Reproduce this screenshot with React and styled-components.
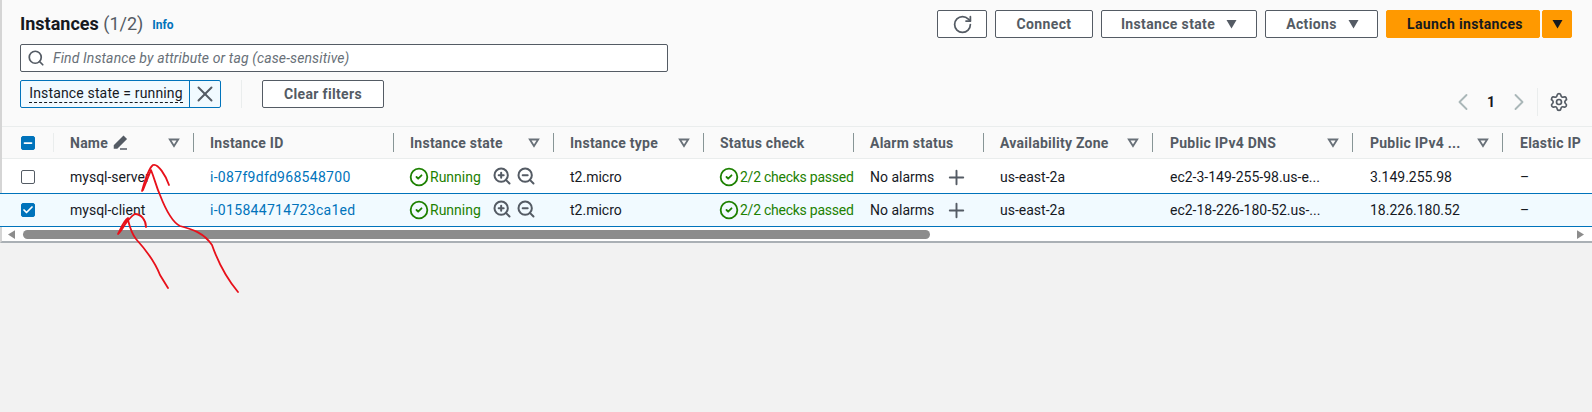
import React from 'react';
import styled, { createGlobalStyle } from 'styled-components';
import { Search, RotateCw, X, ChevronLeft, ChevronRight, Settings, ZoomIn, ZoomOut, CircleCheck, Plus, Check, Minus } from 'lucide-react';

const Global = createGlobalStyle`
  html, body { margin: 0; padding: 0; height: 412px; overflow: hidden; background: #f2f2f2; }
  body { font-family: Roboto, "Liberation Sans", sans-serif; font-size: 14px; color: #16191f; }
`;

const Page = styled.div`
  position: relative;
  width: 1592px;
  height: 412px;
  background: #f2f2f2;
`;

const Panel = styled.section`
  background: #fff;
  border-left: 2px solid #d5d5d5;
  border-bottom: 2px solid #aab0b5;
  height: 243px;
  box-sizing: border-box;
  display: flex;
  flex-direction: column;
`;

const Toolbar = styled.header`
  background: #fafafa;
  height: 127px;
  box-sizing: border-box;
  padding: 10px 20px 0 18px;
  display: grid;
  grid-template-columns: 1fr auto;
  border-bottom: 1px solid #eaeded;
`;

const LeftTools = styled.div`
  display: flex;
  flex-direction: column;
`;

const TitleRow = styled.div`
  height: 27px;
  display: flex;
  align-items: center;
  gap: 9px;
`;

const Title = styled.h1`
  margin: 0;
  font-size: 18px;
  font-weight: 700;
  color: #16191f;
`;

const Count = styled.span`
  font-weight: 400;
  color: #545b64;
`;

const Info = styled.a`
  font-size: 12px;
  font-weight: 700;
  color: #0073bb;
  margin-top: 2px;
`;

const SearchBox = styled.div`
  margin-top: 7px;
  width: 648px;
  height: 28px;
  box-sizing: border-box;
  background: #fff;
  border: 1px solid #545b64;
  border-radius: 2px;
  display: flex;
  align-items: center;
  gap: 8px;
  padding-left: 6px;
  font-style: italic;
  font-size: 14px;
  letter-spacing: 0.12px;
  color: #687078;
`;

const FilterRow = styled.div`
  margin-top: 8px;
  display: flex;
  align-items: center;
  height: 28px;
`;

const Token = styled.div`
  width: 201px;
  height: 28px;
  box-sizing: border-box;
  border: 1px solid #0073bb;
  border-radius: 2px;
  background: #f1faff;
  display: flex;
`;

const TokenLabel = styled.span`
  flex: 1;
  display: flex;
  align-items: center;
  justify-content: center;
  padding-left: 2px;
  border-right: 1px solid #0073bb;
`;

const TokenText = styled.span`
  border-bottom: 1px dashed #16191f;
  line-height: 17px;
  font-size: 14px;
  letter-spacing: 0.15px;
`;

const TokenClose = styled.span`
  width: 30px;
  display: flex;
  align-items: center;
  justify-content: center;
  color: #545b64;
`;

const Divider = styled.span`
  width: 1px;
  height: 28px;
  background: #eaeded;
  margin: 0 20px;
`;

const Button = styled.button`
  font-family: inherit;
  width: ${(p) => p.$w}px;
  height: 28px;
  box-sizing: border-box;
  background: #fff;
  border: 1px solid #545b64;
  border-radius: 2px;
  color: #545b64;
  font-size: 14px;
  font-weight: 700;
  letter-spacing: 0.35px;
  padding: 0 0 0 ${(p) => p.$pl || 0}px;
  display: flex;
  align-items: center;
  justify-content: center;
  gap: 11px;
`;

const Primary = styled(Button)`
  background: #ff9900;
  border: 1px solid #ff9900;
  color: #16191f;
`;

const Caret = styled.svg`
  width: 11px;
  height: 10px;
  fill: currentColor;
  flex: none;
`;

const RightTools = styled.div`
  display: flex;
  flex-direction: column;
  align-items: flex-end;
`;

const Actions = styled.div`
  display: flex;
  gap: 8px;
`;

const SplitGroup = styled.div`
  display: flex;
  gap: 2px;
`;

const Pager = styled.div`
  margin-top: 50px;
  display: flex;
  align-items: center;
  color: #aab7b8;
  height: 28px;
`;

const PageNumber = styled.span`
  font-weight: 700;
  color: #16191f;
  margin: 0 10px;
`;

const PagerSep = styled.span`
  width: 1px;
  height: 28px;
  background: #eaeded;
  margin: 0 11px 0 4px;
`;

const Gear = styled.span`
  display: flex;
  color: #545b64;
  margin-right: 3px;
`;

const COLUMNS = '52px 140px 200px 160px 150px 150px 130px 169px 200px 150px 89px';

const HeadRow = styled.div`
  height: 32px;
  box-sizing: border-box;
  display: grid;
  grid-template-columns: ${COLUMNS};
  background: #fafafa;
  border-bottom: 1px solid #eaeded;
  font-weight: 700;
  letter-spacing: 0.25px;
  color: #545b64;
`;

const HeadCell = styled.div`
  display: flex;
  align-items: center;
  justify-content: space-between;
  padding: 0 13px 0 16px;
  white-space: nowrap;
  min-width: 0;
  border-right: 1px solid ${(p) => (p.$plain ? 'transparent' : '#879596')};
  margin: 6px 0;
  &:nth-child(n + 9) {
    padding-left: 17px;
  }
`;

const HeadGroup = styled.span`
  display: flex;
  align-items: center;
  gap: 5px;
`;

const SelectCell = styled.div`
  display: flex;
  align-items: center;
  justify-content: center;
  border-right: 1px solid ${(p) => (p.$sep ? '#eaeded' : 'transparent')};
  margin: ${(p) => (p.$sep ? '6px 0' : '0')};
`;

const Box = styled.span`
  width: 14px;
  height: 14px;
  box-sizing: border-box;
  border-radius: 2px;
  display: flex;
  align-items: center;
  justify-content: center;
  color: #fff;
  background: ${(p) => (p.$on ? '#0073bb' : '#fff')};
  border: 1px solid ${(p) => (p.$on ? '#0073bb' : '#545b64')};
`;

const Row = styled.div`
  height: 34px;
  box-sizing: border-box;
  display: grid;
  grid-template-columns: ${COLUMNS};
  background: ${(p) => (p.$selected ? '#f1faff' : '#fff')};
  border-top: 1px solid ${(p) => (p.$selected ? '#0073bb' : 'transparent')};
  border-bottom: 1px solid ${(p) => (p.$selected ? '#0073bb' : 'transparent')};
  margin-left: ${(p) => (p.$selected ? '-2px' : '0')};
  padding-left: ${(p) => (p.$selected ? '2px' : '0')};
  padding-top: ${(p) => (p.$selected ? '0' : '2px')};
`;

const Cell = styled.div`
  display: flex;
  align-items: center;
  padding-left: 16px;
  white-space: nowrap;
  overflow: hidden;
  min-width: 0;
  &:nth-child(n + 9) {
    padding-left: 17px;
  }
`;

const Link = styled.a`
  color: #0073bb;
  letter-spacing: 0.3px;
`;

const Status = styled.span`
  display: flex;
  align-items: center;
  gap: 1px;
  margin-left: -1px;
  color: #1d8102;
  letter-spacing: ${(p) => (p.$tight ? '-0.25px' : '0')};
`;

const MagGroup = styled.span`
  display: flex;
  gap: 4px;
  margin-left: 11px;
  margin-top: -3px;
  color: #545b64;
`;

const AddIcon = styled.span`
  display: flex;
  margin-left: 11px;
  color: #545b64;
`;

const ScrollTrack = styled.div`
  flex: 1;
  background: #fff;
  display: grid;
  grid-template-columns: 20px 1fr 20px;
  align-items: center;
`;

const ScrollArrow = styled.svg`
  width: 7px;
  height: 9px;
  fill: #8c8c8c;
  justify-self: center;
  margin-left: ${(p) => p.$ml}px;
`;

const ScrollThumb = styled.div`
  width: 907px;
  height: 9px;
  border-radius: 5px;
  background: #8c8c8c;
  margin-left: 1px;
`;

const Ink = styled.svg`
  position: absolute;
  left: 0;
  top: 0;
  pointer-events: none;
`;

const Down = () => (
  <Caret viewBox="0 0 11 10"><path d="M0.5 1h10L5.5 9.5z" /></Caret>
);

const FilterMark = () => (
  <svg width="12" height="10" viewBox="0 0 12 10" fill="none" stroke="#687078" strokeWidth="1.8">
    <path d="M1.8 1.5h8.4L6 8z" />
  </svg>
);

const Edit = () => (
  <svg width="15" height="15" viewBox="0 0 15 15" fill="none" stroke="#545b64" strokeWidth="1.5">
    <path d="M1.5 10.5 10.5 1.5 13 4 4 13H1.5z" fill="#545b64" />
    <path d="M7 14h7" />
  </svg>
);

const Head = ({ label, filter, edit, plain }) => (
  <HeadCell $plain={plain}>
    <HeadGroup>{label}{edit && <Edit />}</HeadGroup>
    {filter && <FilterMark />}
  </HeadCell>
);

const headers = [
  { label: 'Name', filter: true, edit: true },
  { label: 'Instance ID' },
  { label: 'Instance state', filter: true },
  { label: 'Instance type', filter: true },
  { label: 'Status check' },
  { label: 'Alarm status' },
  { label: 'Availability Zone', filter: true },
  { label: 'Public IPv4 DNS', filter: true },
  { label: 'Public IPv4 ...', filter: true },
  { label: 'Elastic IP', plain: true },
];

const rows = [
  { name: 'mysql-server', id: 'i-087f9dfd968548700', dns: 'ec2-3-149-255-98.us-e...', ip: '3.149.255.98' },
  { name: 'mysql-client', id: 'i-015844714723ca1ed', dns: 'ec2-18-226-180-52.us-...', ip: '18.226.180.52', selected: true },
];

export default function App() {
  return (
    <Page>
      <Global />
      <Panel>
        <Toolbar>
          <LeftTools>
            <TitleRow>
              <Title>Instances <Count>(1/2)</Count></Title>
              <Info>Info</Info>
            </TitleRow>
            <SearchBox>
              <Search size={18} color="#545b64" strokeWidth={2.3} />
              Find Instance by attribute or tag (case-sensitive)
            </SearchBox>
            <FilterRow>
              <Token>
                <TokenLabel><TokenText>Instance state = running</TokenText></TokenLabel>
                <TokenClose><X size={26} strokeWidth={1.8} /></TokenClose>
              </Token>
              <Divider />
              <Button $w={122}>Clear filters</Button>
            </FilterRow>
          </LeftTools>
          <RightTools>
            <Actions>
              <Button $w={50}><RotateCw size={21} strokeWidth={2} /></Button>
              <Button $w={98}>Connect</Button>
              <Button $w={156}>Instance state <Down /></Button>
              <Button $w={113} $pl={2}>Actions <Down /></Button>
              <SplitGroup>
                <Primary $w={154} $pl={4}>Launch instances</Primary>
                <Primary $w={30}><Down /></Primary>
              </SplitGroup>
            </Actions>
            <Pager>
              <ChevronLeft size={28} strokeWidth={1.6} />
              <PageNumber>1</PageNumber>
              <ChevronRight size={28} strokeWidth={1.6} />
              <PagerSep />
              <Gear><Settings size={20} strokeWidth={2} /></Gear>
            </Pager>
          </RightTools>
        </Toolbar>
        <HeadRow>
          <SelectCell $sep><Box $on><Minus size={12} strokeWidth={3.5} /></Box></SelectCell>
          {headers.map((h) => <Head key={h.label} {...h} />)}
        </HeadRow>
        {rows.map((r) => (
          <Row key={r.id} $selected={r.selected}>
            <SelectCell>
              <Box $on={r.selected}>{r.selected && <Check size={12} strokeWidth={3.5} />}</Box>
            </SelectCell>
            <Cell>{r.name}</Cell>
            <Cell><Link>{r.id}</Link></Cell>
            <Cell>
              <Status><CircleCheck size={20} strokeWidth={2.2} />Running</Status>
              <MagGroup><ZoomIn size={20} strokeWidth={2.4} /><ZoomOut size={20} strokeWidth={2.4} /></MagGroup>
            </Cell>
            <Cell>t2.micro</Cell>
            <Cell><Status $tight><CircleCheck size={20} strokeWidth={2.2} />2/2 checks passed</Status></Cell>
            <Cell>No alarms<AddIcon><Plus size={23} strokeWidth={2} /></AddIcon></Cell>
            <Cell>us-east-2a</Cell>
            <Cell>{r.dns}</Cell>
            <Cell>{r.ip}</Cell>
            <Cell>–</Cell>
          </Row>
        ))}
        <ScrollTrack>
          <ScrollArrow viewBox="0 0 8 10" $ml={-1}><path d="M8 0v10L0 5z" /></ScrollArrow>
          <ScrollThumb />
          <ScrollArrow viewBox="0 0 8 10" $ml={-4}><path d="M0 0v10l8-5z" /></ScrollArrow>
        </ScrollTrack>
      </Panel>
      <Ink width="1592" height="412" viewBox="0 0 1592 412" fill="none" stroke="#e8101a" strokeWidth="1.8" strokeLinecap="round" strokeLinejoin="round">
        <path d="M142 191C145 180 149 168 153 165C158 163 166 176 169 185" />
        <path d="M143 190 151 170C155 180 156 186 160 195C165 208 172 222 180 226C192 229 204 233 212 245C218 262 228 280 238 292" />
        <path d="M118 234C121 228 124 220 128 218C125 225 122 230 119 233C124 226 130 216 135 214C141 214 146 220 146 227" />
        <path d="M128 220C130 228 132 234 136 239C146 250 155 262 160 275L168 288" />
      </Ink>
    </Page>
  );
}
